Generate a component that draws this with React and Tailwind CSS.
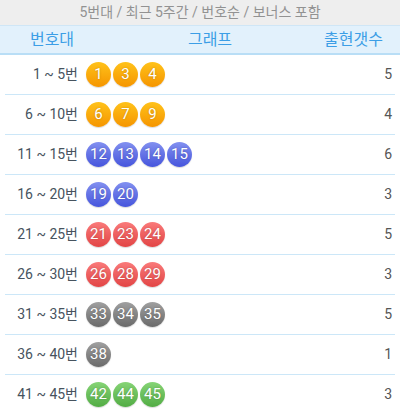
const ROWS = [
  { label: '1 ~ 5번', nums: [1, 3, 4], count: 5 },
  { label: '6 ~ 10번', nums: [6, 7, 9], count: 4 },
  { label: '11 ~ 15번', nums: [12, 13, 14, 15], count: 6 },
  { label: '16 ~ 20번', nums: [19, 20], count: 3 },
  { label: '21 ~ 25번', nums: [21, 23, 24], count: 5 },
  { label: '26 ~ 30번', nums: [26, 28, 29], count: 3 },
  { label: '31 ~ 35번', nums: [33, 34, 35], count: 5 },
  { label: '36 ~ 40번', nums: [38], count: 1 },
  { label: '41 ~ 45번', nums: [42, 44, 45], count: 3 },
]

function ballClass(n) {
  if (n <= 10) return 'bg-[linear-gradient(#ffc21a,#f59500)]'
  if (n <= 20) return 'bg-[linear-gradient(#8290f0,#4655dc)]'
  if (n <= 30) return 'bg-[linear-gradient(#fa7a7a,#e24545)]'
  if (n <= 40) return 'bg-[linear-gradient(#a0a0a0,#6a6a6a)]'
  return 'bg-[linear-gradient(#86d476,#52ac44)]'
}

function Ball({ n }) {
  return (
    <div
      className={`w-[25px] h-[25px] rounded-full flex items-center justify-center text-white text-[15px] leading-none shadow-[0_1px_1px_rgba(0,0,0,0.15)] [text-shadow:0_0_2px_rgba(0,0,0,0.25)] ${ballClass(n)}`}
    >
      {n}
    </div>
  )
}

export default function App() {
  return (
    <div className="w-[400px] h-[414px] overflow-hidden bg-white font-['Roboto','Noto_Sans_CJK_KR',sans-serif]">
      <div className="h-[26px] bg-[#eeeeee] flex items-center justify-center text-[14px] text-[#929292] border-b border-[#cfe6f6]">
        5번대 / 최근 5주간 / 번호순 / 보너스 포함
      </div>
      <div className="h-[29px] bg-[#e2f1fc] flex items-center text-[16px] text-[#3c9ee6] border-b-2 border-[#b9def6]">
        <div className="w-[104px] text-center">번호대</div>
        <div className="flex-1 text-center">그래프</div>
        <div className="w-[84px] text-right pr-[17px]">출현갯수</div>
      </div>
      <div className="flex flex-col">
        {ROWS.map((r) => (
          <div key={r.label} className="mx-[5px] h-[40px] flex items-center border-b border-[#cce7f8]">
            <div className="w-[73px] text-right text-[14px] text-[#47535e]">{r.label}</div>
            <div className="flex-1 flex gap-[2px] pl-[8px]">
              {r.nums.map((n) => (
                <Ball key={n} n={n} />
              ))}
            </div>
            <div className="pr-[3px] text-[14px] text-[#555]">{r.count}</div>
          </div>
        ))}
      </div>
    </div>
  )
}
